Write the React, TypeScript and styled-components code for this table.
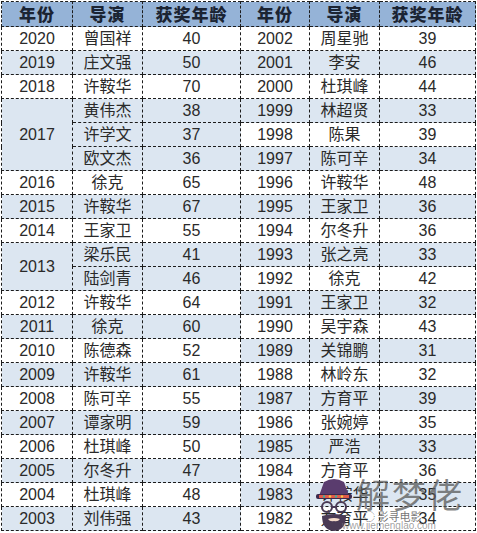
import React from "react";
import styled, { createGlobalStyle } from "styled-components";

const GlobalStyle = createGlobalStyle`
  html, body {
    margin: 0;
    padding: 0;
    background: #ffffff;
  }
  body {
    font-family: "Liberation Sans", "Noto Sans CJK SC", sans-serif;
  }
`;

const Page = styled.div`
  position: relative;
  width: 477px;
  height: 533px;
  overflow: hidden;
  padding: 1px 0 0 1px;
  box-sizing: border-box;
`;

const Table = styled.table`
  border-collapse: collapse;
  table-layout: fixed;
  width: 474px;
`;

const HeadCell = styled.th`
  height: 24px;
  padding: 0;
  background: #95b3d7;
  border: 1px dashed #1c1c1c;
  color: #1b2433;
  font-family: "Noto Sans CJK SC", sans-serif;
  font-weight: 900;
  font-size: 17px;
  line-height: 24px;
  letter-spacing: 1px;
  text-align: center;
`;

const Cell = styled.td<{ $shade: boolean }>`
  height: 23px;
  padding: 0;
  background: ${(p) => (p.$shade ? "#dce6f1" : "#ffffff")};
  border: 1px dashed #1c1c1c;
  color: #2a2a2a;
  font-family: "Liberation Sans", "Noto Sans CJK SC", sans-serif;
  font-size: 16px;
  line-height: 23px;
  text-align: center;
  white-space: nowrap;
`;

const Watermark = styled.div`
  position: absolute;
  left: 312px;
  top: 470px;
  width: 165px;
  height: 63px;
  pointer-events: none;
`;

const Mascot = styled.svg`
  position: absolute;
  left: 4px;
  top: 6px;
  width: 36px;
  height: 56px;
`;

const Brand = styled.div`
  position: absolute;
  left: 44px;
  top: 4px;
  font-family: "Noto Sans CJK SC", sans-serif;
  font-size: 34px;
  line-height: 40px;
  color: rgba(90, 90, 90, 0.75);
  letter-spacing: 2px;
`;

const Channel = styled.div`
  position: absolute;
  left: 52px;
  top: 38px;
  font-family: "Noto Sans CJK SC", sans-serif;
  font-size: 11px;
  color: rgba(80, 80, 80, 0.8);
`;

const Site = styled.div`
  position: absolute;
  left: 30px;
  top: 50px;
  font-family: "Liberation Sans", sans-serif;
  font-size: 10px;
  color: rgba(120, 120, 120, 0.7);
`;

interface LeftGroup {
  year: string;
  entries: [string, string][];
}

const leftGroups: LeftGroup[] = [
  { year: "2020", entries: [["曾国祥", "40"]] },
  { year: "2019", entries: [["庄文强", "50"]] },
  { year: "2018", entries: [["许鞍华", "70"]] },
  {
    year: "2017",
    entries: [
      ["黄伟杰", "38"],
      ["许学文", "37"],
      ["欧文杰", "36"],
    ],
  },
  { year: "2016", entries: [["徐克", "65"]] },
  { year: "2015", entries: [["许鞍华", "67"]] },
  { year: "2014", entries: [["王家卫", "55"]] },
  {
    year: "2013",
    entries: [
      ["梁乐民", "41"],
      ["陆剑青", "46"],
    ],
  },
  { year: "2012", entries: [["许鞍华", "64"]] },
  { year: "2011", entries: [["徐克", "60"]] },
  { year: "2010", entries: [["陈德森", "52"]] },
  { year: "2009", entries: [["许鞍华", "61"]] },
  { year: "2008", entries: [["陈可辛", "55"]] },
  { year: "2007", entries: [["谭家明", "59"]] },
  { year: "2006", entries: [["杜琪峰", "50"]] },
  { year: "2005", entries: [["尔冬升", "47"]] },
  { year: "2004", entries: [["杜琪峰", "48"]] },
  { year: "2003", entries: [["刘伟强", "43"]] },
];

const rightRows: [string, string, string][] = [
  ["2002", "周星驰", "39"],
  ["2001", "李安", "46"],
  ["2000", "杜琪峰", "44"],
  ["1999", "林超贤", "33"],
  ["1998", "陈果", "39"],
  ["1997", "陈可辛", "34"],
  ["1996", "许鞍华", "48"],
  ["1995", "王家卫", "36"],
  ["1994", "尔冬升", "36"],
  ["1993", "张之亮", "33"],
  ["1992", "徐克", "42"],
  ["1991", "王家卫", "32"],
  ["1990", "吴宇森", "43"],
  ["1989", "关锦鹏", "31"],
  ["1988", "林岭东", "32"],
  ["1987", "方育平", "39"],
  ["1986", "张婉婷", "35"],
  ["1985", "严浩", "33"],
  ["1984", "方育平", "36"],
  ["1983", "许鞍华", "35"],
  ["1982", "方育平", "34"],
];

// flatten the left half so every table row knows its group and position
const leftRows = leftGroups.flatMap((g, gi) =>
  g.entries.map((e, ei) => ({
    year: g.year,
    span: g.entries.length,
    first: ei === 0,
    director: e[0],
    age: e[1],
    shade: gi % 2 === 1,
  }))
);

const headers = ["年份", "导演", "获奖年龄", "年份", "导演", "获奖年龄"];
const widths = [71, 70, 98, 69, 70, 96];

const App: React.FunctionComponent = () => {
  return (
    <>
      <GlobalStyle />
      <Page>
        <Table>
          <colgroup>
            {widths.map((w, i) => (
              <col key={i} style={{ width: w }} />
            ))}
          </colgroup>
          <thead>
            <tr>
              {headers.map((h, i) => (
                <HeadCell key={i}>{h}</HeadCell>
              ))}
            </tr>
          </thead>
          <tbody>
            {rightRows.map((r, i) => {
              const l = leftRows[i];
              const rShade = i % 2 === 1;
              return (
                <tr key={i}>
                  {l.first && (
                    <Cell $shade={l.shade} rowSpan={l.span}>
                      {l.year}
                    </Cell>
                  )}
                  <Cell $shade={l.shade}>{l.director}</Cell>
                  <Cell $shade={l.shade}>{l.age}</Cell>
                  <Cell $shade={rShade}>{r[0]}</Cell>
                  <Cell $shade={rShade}>{r[1]}</Cell>
                  <Cell $shade={rShade}>{r[2]}</Cell>
                </tr>
              );
            })}
          </tbody>
        </Table>
        <Watermark>
          <Mascot viewBox="0 0 36 56">
            <path d="M3 20 L8 6 Q18 0 28 6 L33 20 Z" fill="#5a3c6e" />
            <rect x="0" y="18" width="36" height="5" rx="2" fill="#3d2a4e" />
            <rect x="3" y="19" width="30" height="3" fill="#e05a4a" />
            <circle cx="8" cy="20.5" r="1.2" fill="#3fb0a0" />
            <circle cx="14" cy="20.5" r="1.2" fill="#f2c94c" />
            <circle cx="20" cy="20.5" r="1.2" fill="#3fb0a0" />
            <circle cx="26" cy="20.5" r="1.2" fill="#f2c94c" />
            <circle cx="11" cy="31" r="5" fill="none" stroke="#4a3a55" strokeWidth="2" />
            <circle cx="25" cy="31" r="5" fill="none" stroke="#4a3a55" strokeWidth="2" />
            <line x1="16" y1="31" x2="20" y2="31" stroke="#4a3a55" strokeWidth="2" />
            <path d="M6 40 Q18 36 30 40 Q30 54 18 55 Q6 54 6 40 Z" fill="#4a3a55" />
            <path d="M12 43 Q18 41 24 43 Q22 46 18 45 Q14 46 12 43 Z" fill="#f4d9c8" />
          </Mascot>
          <Brand>解梦佬</Brand>
          <Channel>◌ 影寻电影</Channel>
          <Site>www.jiemenglao.com</Site>
        </Watermark>
      </Page>
    </>
  );
};

export default App;
